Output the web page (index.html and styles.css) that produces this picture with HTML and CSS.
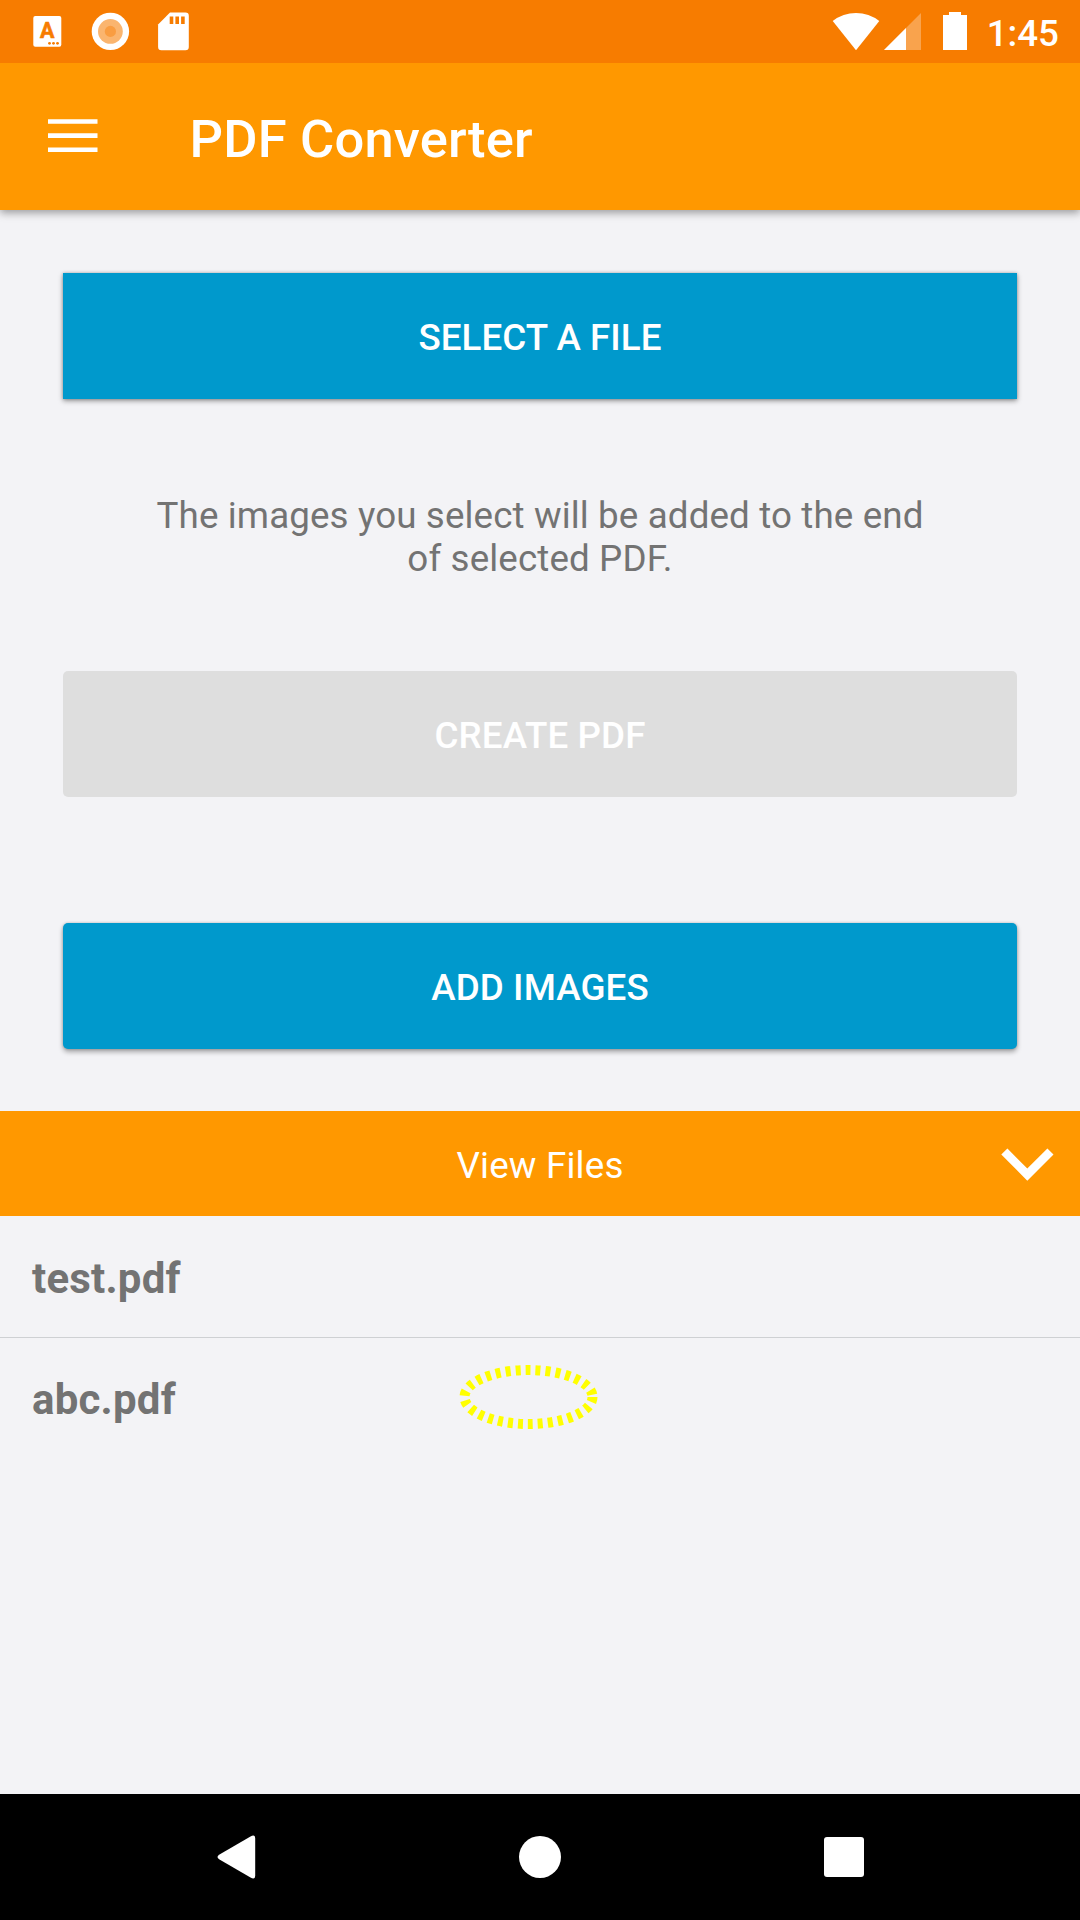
FILE: index.html
```html
<!DOCTYPE html>
<html lang="en">
<head>
<meta charset="utf-8">
<title>PDF Converter</title>
<link rel="stylesheet" href="styles.css">
</head>
<body>
<div class="screen">
  <header class="status-bar">
    <div class="status-group">
      <svg class="status-icon" width="36" height="63" viewBox="29 0 36 63">
        <rect x="33.3" y="16" width="28" height="30.7" rx="2" fill="#fff"/>
        <text class="badge-letter" x="47.2" y="38.3" text-anchor="middle">A</text>
        <g fill="#f77c00"><circle cx="49.5" cy="43.3" r="1.4"/><circle cx="53.5" cy="43.3" r="1.4"/><circle cx="57.5" cy="43.3" r="1.4"/></g>
      </svg>
      <svg class="status-icon" width="40" height="63" viewBox="90 0 40 63">
        <circle cx="110.4" cy="31.4" r="18.7" fill="#fff"/>
        <circle cx="110.4" cy="31.4" r="12.4" fill="#fab56f"/>
        <circle cx="110.4" cy="31.4" r="5.6" fill="#f99d41"/>
      </svg>
      <svg class="status-icon" width="40" height="63" viewBox="154 0 40 63">
        <path d="M170 12.6H185.5Q188.8 12.6 188.8 15.9V47Q188.8 50.3 185.5 50.3H161.400Q158.100 50.3 158.100 47V24.500Z" fill="#fff"/>
        <path d="M169.700 16.500h3.600v7.500h-3.600zM175.400 16.500h3.600v7.500h-3.600zM181.100 16.500h3.600v7.500h-3.600z" fill="#f77c00"/>
      </svg>
    </div>
    <div class="status-group status-right">
      <svg width="51" height="63" viewBox="830 0 51 63"><path d="M832.700 21Q843 13 856 13T879.300 21L856 50.200Z" fill="#fff"/></svg>
      <svg width="62" height="63" viewBox="881 0 62 63"><path d="M921 13V50H884Z" fill="#fff" fill-opacity=".3"/><path d="M906 28V50H884Z" fill="#fff"/></svg>
      <svg width="27" height="63" viewBox="943 0 27 63"><path d="M949 12H961V15H967V50H943V15H949Z" fill="#fff"/></svg>
      <span class="clock">1:45</span>
    </div>
  </header>
  <div class="toolbar">
    <svg class="menu-icon" width="50" height="36" viewBox="0 0 50 36"><path d="M0 .2h49.500v4.600H0zM0 14.200h49.500v4.800H0zM0 28.400h49.500v4.600H0z" fill="#fff"/></svg>
    <h1 class="title">PDF Converter</h1>
  </div>
  <main class="content">
    <button class="btn btn-square">SELECT A FILE</button>
    <p class="hint">The images you select will be added to the end<br>of selected PDF.</p>
    <button class="btn btn-disabled" disabled>CREATE PDF</button>
    <button class="btn btn-add">ADD IMAGES</button>
  </main>
  <div class="files-header">
    <span>View Files</span>
    <svg class="chevron" width="53" height="33" viewBox="1001 1148 53 33"><path d="M1001.300 1154.500L1007.400 1148.600L1027.300 1168.400L1047.400 1148.600L1053.500 1154.500L1027.300 1180.700Z" fill="#fff"/></svg>
  </div>
  <ul class="files">
    <li class="file">test.pdf</li>
    <li class="file">abc.pdf
      <svg class="marker" width="140" height="66" viewBox="0 0 140 66"><ellipse cx="69.500" cy="33" rx="64" ry="27" fill="none" stroke="#ff0" stroke-width="10" stroke-dasharray="5 5"/></svg>
    </li>
  </ul>
  <nav class="nav-bar">
    <svg width="40" height="44" viewBox="215.500 1835 40 44"><path d="M219 1854.500L250 1836.500Q254.700 1834 254.700 1838.500V1875.500Q254.700 1880 250 1877.500L219 1859.500Q215 1857 219 1854.500Z" fill="#fff"/></svg>
    <svg width="44" height="44" viewBox="0 0 44 44"><circle cx="22" cy="22" r="21" fill="#fff"/></svg>
    <svg width="40" height="40" viewBox="0 0 40 40"><rect width="40" height="40" rx="3" fill="#fff"/></svg>
  </nav>
</div>
</body>
</html>
```
FILE: styles.css
```css
* { box-sizing: border-box; }

body {
  margin: 0;
  font-family: Roboto, sans-serif;
  font-size: 36.75px;
  line-height: 43px;
  color: #737373;
  background: #f3f3f6;
}

svg { display: block; flex: none; }

.screen {
  width: 1080px;
  height: 1920px;
  display: flex;
  flex-direction: column;
}

.status-bar {
  position: relative;
  z-index: 1;
  height: 63px;
  flex: none;
  display: flex;
  justify-content: space-between;
  padding: 0 21px 0 29px;
  background: #f77c00;
}

.status-group { display: flex; gap: 24.5px; }
.status-right { gap: 0; }

.badge-letter {
  font-size: 21.5px;
  font-weight: 700;
  fill: #f77c00;
  stroke: #f77c00;
  stroke-width: 0.6px;
}

.clock {
  width: 89px;
  padding-top: 12px;
  text-align: right;
  font-weight: 500;
  color: #fff;
}

.toolbar {
  height: 147px;
  flex: none;
  display: flex;
  align-items: center;
  gap: 91.5px;
  padding-left: 48px;
  background: #ff9800;
  box-shadow: 0 3px 8px rgba(0, 0, 0, 0.36);
}

.title {
  margin: 0;
  padding-top: 5px;
  font-size: 52.5px;
  line-height: 62px;
  font-weight: 500;
  letter-spacing: 0.18px;
  color: #fff;
}

.content {
  flex: none;
  height: 901px;
  display: flex;
  flex-direction: column;
  padding: 63px 63px 0;
}

.btn {
  height: 126px;
  flex: none;
  padding: 3px 0 0;
  border: 0;
  border-radius: 5px;
  font: 500 36.75px/43px Roboto, sans-serif;
  letter-spacing: 0.1px;
  color: #fff;
  background: #0099cc;
  box-shadow: 0 3px 5px rgba(0, 0, 0, 0.32), 0 0 3px rgba(0, 0, 0, 0.2);
}

.btn-square {
  border-radius: 0;
  letter-spacing: 0.03px;
  box-shadow: 0 2px 5px rgba(0, 0, 0, 0.38), 0 0 3px rgba(0, 0, 0, 0.2);
}

.hint { margin: 95px 0 91px; text-align: center; letter-spacing: 0.12px; }

.btn-disabled { background: #dedede; box-shadow: none; }
.btn-add { margin-top: 126px; }

.files-header {
  position: relative;
  height: 105px;
  flex: none;
  display: flex;
  align-items: center;
  justify-content: center;
  padding-top: 3px;
  letter-spacing: 0.2px;
  color: #fff;
  background: #ff9800;
}

.chevron { position: absolute; right: 26px; top: 37px; }

.files {
  flex: 1;
  margin: 0;
  padding: 0;
  list-style: none;
}

.file {
  position: relative;
  height: 121px;
  padding: 37px 32px 0;
  font-size: 42px;
  line-height: 49px;
  font-weight: 700;
  letter-spacing: 0.2px;
}

.file:first-child {
  height: 122px;
  padding-top: 38px;
  border-bottom: 1px solid #ced0d3;
}

.marker { position: absolute; left: 459px; top: 26px; }

.nav-bar {
  height: 126px;
  flex: none;
  display: flex;
  align-items: center;
  justify-content: space-between;
  padding: 0 216px;
  background: #000;
}
```
